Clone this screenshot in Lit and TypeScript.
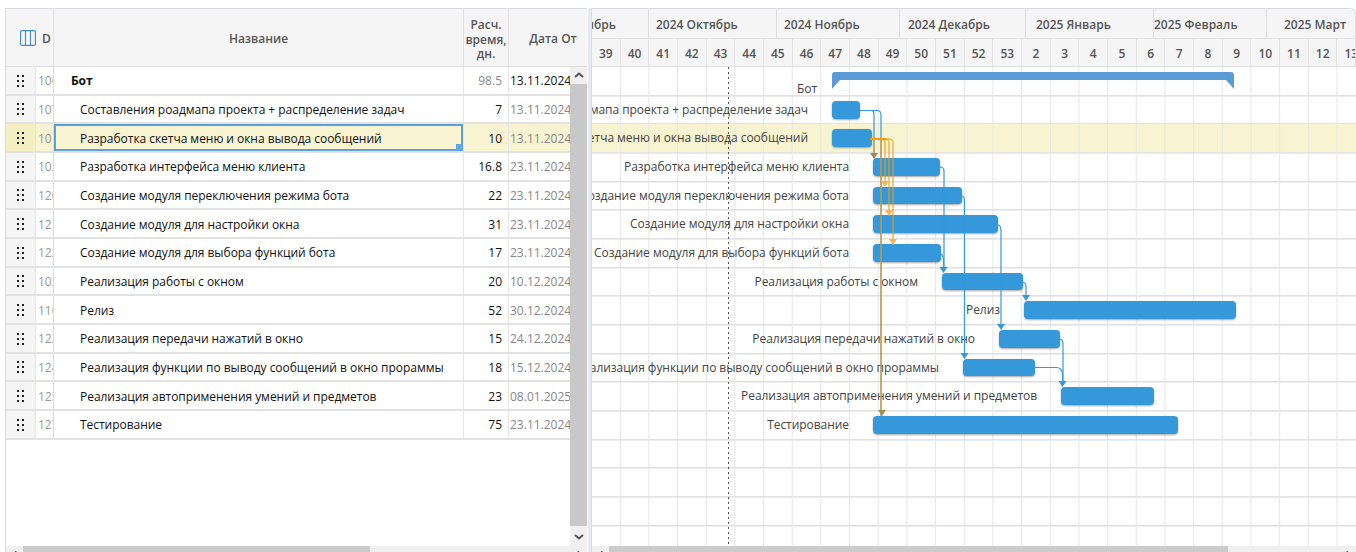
import { LitElement, html, css, svg, unsafeCSS } from "lit";
import { customElement } from "lit/decorators.js";

const FONT = `"Open Sans", "Noto Sans", sans-serif`;

const rows = [
  { id: "106", name: "Бот", hours: "98.5", from: "13.11.2024", summary: true },
  { id: "107", name: "Составления роадмапа проекта + распределение задач", hours: "7", from: "13.11.2024" },
  { id: "101", name: "Разработка скетча меню и окна вывода сообщений", hours: "10", from: "13.11.2024", selected: true },
  { id: "102", name: "Разработка интерфейса меню клиента", hours: "16.8", from: "23.11.2024" },
  { id: "120", name: "Создание модуля переключения режима бота", hours: "22", from: "23.11.2024" },
  { id: "121", name: "Создание модуля для настройки окна", hours: "31", from: "23.11.2024" },
  { id: "122", name: "Создание модуля для выбора функций бота", hours: "17", from: "23.11.2024" },
  { id: "103", name: "Реализация работы с окном", hours: "20", from: "10.12.2024" },
  { id: "110", name: "Релиз", hours: "52", from: "30.12.2024" },
  { id: "123", name: "Реализация передачи нажатий в окно", hours: "15", from: "24.12.2024" },
  { id: "124", name: "Реализация функции по выводу сообщений в окно прораммы", hours: "18", from: "15.12.2024" },
  { id: "125", name: "Реализация автоприменения умений и предметов", hours: "23", from: "08.01.2025" },
  { id: "127", name: "Тестирование", hours: "75", from: "23.11.2024" },
];

// page coordinates of the bars, index follows rows
const bars = [
  { x0: 832, x1: 1234, y: 72, h: 7 },
  { x0: 832, x1: 860, y: 101, h: 18 },
  { x0: 832, x1: 872, y: 129, h: 18 },
  { x0: 873, x1: 940, y: 158, h: 18 },
  { x0: 873, x1: 962, y: 187, h: 17 },
  { x0: 873, x1: 998, y: 215, h: 18 },
  { x0: 873, x1: 941, y: 244, h: 18 },
  { x0: 942, x1: 1023, y: 273, h: 17 },
  { x0: 1024, x1: 1236, y: 301, h: 18 },
  { x0: 999, x1: 1060, y: 330, h: 18 },
  { x0: 963, x1: 1035, y: 359, h: 17 },
  { x0: 1061, x1: 1154, y: 387, h: 18 },
  { x0: 873, x1: 1178, y: 416, h: 18 },
];

const labelEnds = [817, 808, 808, 849, 849, 849, 849, 918, 1000, 975, 939, 1037, 849];

// chart origin in page coordinates
const OX = 592;
const OY = 67;
const VIEW = `${OX} ${OY} 764 485`;

const months = [
  { label: "2024 Сентябрь", width: 57, pad: -64 },
  { label: "2024 Октябрь", width: 128, pad: 7 },
  { label: "2024 Ноябрь", width: 123, pad: 7 },
  { label: "2024 Декабрь", width: 126, pad: 8 },
  { label: "2025 Январь", width: 128, pad: 10 },
  { label: "2025 Февраль", width: 113, pad: 0 },
  { label: "2025 Март", width: 90, pad: 17 },
];

const weeks = [39, 40, 41, 42, 43, 44, 45, 46, 47, 48, 49, 50, 51, 52, 53, 2, 3, 4, 5, 6, 7, 8, 9, 10, 11, 12, 13];

const BLUE = "#3498db";
const ORANGE = "#f39c12";

const blueLinks = [
  "M860 110.5H877Q881 110.5 881 115V420",
  "M860 110.5H871Q874 110.5 874 114V155",
  "M940 167Q944 167 944 171V268",
  "M941 254Q943.5 256 943.5 260V268",
  "M962 196Q964.5 197 964.5 201V355",
  "M998 225Q1001 226 1001 230V326",
  "M1023 282Q1026 283 1026 287V297",
  "M1060 339Q1063 340 1063 344V383",
  "M1035 367.5H1057Q1062 368 1062.5 374V383",
];

const orangeLinks = [
  "M870 139H870Q874 139 874 143V155",
  "M870 139H877Q881 139 881 143V412",
  "M870 139H881Q885 139 885 143V183",
  "M870 139H885Q889 139 889 143V212",
  "M870 139H889Q893 139 893 143V241",
];

const arrow = (x: number, tip: number, fill: string) =>
  svg`<path d="M${x - 4} ${tip - 6}H${x + 4}L${x} ${tip}Z" fill=${fill}></path>`;

const chevron = (d: string) => html`
  <svg width="10" height="7" viewBox="0 0 10 7"><path d=${d} fill="none" stroke="#555" stroke-width="2"></path></svg>
`;

const hscroll = (thumb: number) => html`
  <div class="hscroll">
    <div class="hbtn">${chevron("M6.5 0.5 3 3.5 6.5 6.5")}</div>
    <div class="hthumb" style="width:${thumb}px"></div>
    <div class="htrack"></div>
    <div class="hbtn">${chevron("M3.5 0.5 7 3.5 3.5 6.5")}</div>
  </div>
`;

@customElement("app-root")
export class AppRoot extends LitElement {
  static styles = css`
    :host {
      display: flex;
      align-items: flex-start;
      width: 1356px;
      height: 552px;
      overflow: hidden;
      box-sizing: border-box;
      padding: 8px 0 0 5px;
      background: #fff;
      font-family: ${unsafeCSS(FONT)};
      font-size: 12px;
      --row: 28.67px;
      --line: #e2e2e2;
    }
    .left {
      width: 582px;
      flex: none;
      display: flex;
      flex-direction: column;
      border-left: 1px solid #dcdcdc;
      box-sizing: border-box;
    }
    .cols {
      display: grid;
      grid-template-columns: 30px 18px 410px 45px 61px;
    }
    .head {
      height: 59px;
      box-sizing: border-box;
      border-top: 1px solid #d9dde2;
      border-bottom: 1px solid #dedede;
      background: #f5f5f5;
      color: #555;
      font-weight: 600;
      grid-template-columns: 30px 18px 410px 45px 78px;
    }
    .head > div {
      display: flex;
      align-items: center;
      justify-content: center;
      text-align: center;
      border-right: 1px solid #e0e0e0;
      overflow: hidden;
      line-height: 14.5px;
      padding-top: 3px;
    }
    .head .tool {
      border-right: none;
      justify-content: flex-end;
      padding-top: 1px;
    }
    .head .d {
      justify-content: flex-start;
      padding-left: 6px;
    }
    .head .hours {
      padding: 5px 0 0;
    }
    .head .last {
      border-right: none;
      padding-left: 10px;
    }
    .main {
      height: 479px;
      display: flex;
    }
    .table {
      flex: 1;
      min-width: 0;
    }
    .row {
      height: var(--row);
      box-sizing: border-box;
      border-bottom: 2px solid var(--line);
      color: #111;
    }
    .row > div {
      display: flex;
      align-items: center;
      overflow: hidden;
      white-space: nowrap;
      border-right: 1px solid #e6e6e6;
      box-sizing: border-box;
      position: relative;
      padding-top: 1px;
    }
    .row .grip {
      background: #f5f5f5;
      justify-content: center;
      padding-right: 1px;
    }
    .row .id {
      color: #999;
      padding-left: 2px;
      border-right-color: #dcdcdc;
    }
    .row .name {
      padding-left: 26px;
      letter-spacing: -0.04px;
    }
    .row .hours {
      justify-content: flex-end;
      padding-right: 6px;
    }
    .row .from {
      color: #888;
      padding-left: 1px;
      border-right: none;
    }
    .row.summary .name {
      font-weight: 700;
      padding-left: 17px;
    }
    .row.summary .hours {
      color: #888;
    }
    .row.summary .from {
      color: #111;
    }
    .row.selected > div {
      background: #f8f4d2;
    }
    .row.selected .grip {
      background: #f3efc2;
    }
    .row.selected .name {
      box-shadow: inset 0 0 0 2px #5c9fdc;
    }
    .fill-handle {
      position: absolute;
      right: 0;
      bottom: 0;
      width: 7px;
      height: 7px;
      background: #5ca7ec;
    }
    .vscroll {
      width: 17px;
      flex: none;
      display: flex;
      flex-direction: column;
      background: #f0f0f0;
    }
    .vbtn {
      height: 17px;
      flex: none;
      display: flex;
      align-items: center;
      justify-content: center;
    }
    .vbtn.down {
      height: 20px;
    }
    .vthumb {
      flex: 1;
      background: #c8c8c8;
    }
    .hscroll {
      height: 16px;
      flex: none;
      display: flex;
      background: #f0f0f0;
    }
    .hbtn {
      width: 17px;
      flex: none;
      display: flex;
      align-items: center;
      justify-content: center;
    }
    .hthumb {
      flex: none;
      background: #cbcbcb;
    }
    .htrack {
      flex: 1;
    }
    .splitter {
      width: 5px;
      height: 544px;
      flex: none;
      box-sizing: border-box;
      background: linear-gradient(to right, #fff 1px, #e6e9ee 1px, #e6e9ee 4px, #d5dae3 4px);
    }
    .gantt {
      flex: 1;
      min-width: 0;
      display: flex;
      flex-direction: column;
    }
    .scale {
      height: 59px;
      flex: none;
      box-sizing: border-box;
      overflow: hidden;
      border-top: 1px solid #d9dde2;
      border-right: 1px solid #d9dde2;
      border-top-right-radius: 6px;
      border-bottom: 1px solid #dedede;
      background: #f5f5f5;
      color: #555;
      font-weight: 600;
    }
    .scale-row {
      display: flex;
      height: 29px;
      white-space: nowrap;
    }
    .scale-row + .scale-row {
      height: 29px;
      border-top: 1px solid #e2e2e2;
      box-sizing: border-box;
    }
    .month {
      flex: none;
      box-sizing: border-box;
      display: flex;
      align-items: center;
      border-right: 1px solid #dedede;
      padding-top: 1px;
    }
    .week {
      flex: none;
      width: 28.68px;
      box-sizing: border-box;
      display: flex;
      align-items: center;
      justify-content: center;
      border-right: 1px solid #e2e2e2;
    }
    .chart {
      height: 479px;
      flex: none;
      position: relative;
      overflow: hidden;
    }
    .grid-row {
      height: var(--row);
      box-sizing: border-box;
      border-bottom: 1px solid var(--line);
      box-shadow: 0 1px 0 #ececec;
      background-image: linear-gradient(to right, transparent 27.2px, #e6e6e6 27.2px);
      background-size: 28.68px 100%;
    }
    .grid-row.selected {
      background-color: #f8f4d2;
    }
    .links {
      position: absolute;
      left: 0;
      top: 0;
      width: 764px;
      height: 485px;
    }
    .bar {
      position: absolute;
      background: ${unsafeCSS(BLUE)};
      border-radius: 4px;
      box-shadow: 0 1px 2px rgba(60, 60, 60, 0.45);
    }
    .label {
      position: absolute;
      transform: translateX(-100%);
      white-space: nowrap;
      color: #444;
      line-height: 16px;
      letter-spacing: -0.05px;
    }
  `;

  private grip() {
    const dots = [0, 5, 10].flatMap((y) => [0, 5].map((x) => svg`<rect x=${x} y=${y} width="2" height="2"></rect>`));
    return html`<svg width="7" height="12" viewBox="0 0 7 12" fill="#222">${dots}</svg>`;
  }

  private renderLeft() {
    return html`
      <div class="left">
        <div class="cols head">
          <div class="tool">
            <svg width="16" height="16" viewBox="0 0 16 16" fill="none" stroke="#3d8ccb" stroke-width="1.1">
              <rect x="0.6" y="0.6" width="14.8" height="14.8" rx="1.5"></rect>
              <path d="M5.5 0.6V15.4M10.5 0.6V15.4"></path>
            </svg>
          </div>
          <div class="d">D</div>
          <div>Название</div>
          <div class="hours">Расч. время, дн.</div>
          <div class="last">Дата От</div>
        </div>
        <div class="main">
          <div class="table">
            ${rows.map(
              (r) => html`
                <div class="cols row ${r.summary ? "summary" : ""} ${r.selected ? "selected" : ""}">
                  <div class="grip">${this.grip()}</div>
                  <div class="id">${r.id}</div>
                  <div class="name">${r.name}${r.selected ? html`<span class="fill-handle"></span>` : ""}</div>
                  <div class="hours">${r.hours}</div>
                  <div class="from">${r.from}</div>
                </div>
              `
            )}
          </div>
          <div class="vscroll">
            <div class="vbtn">${chevron("M1 5 5 1.5 9 5")}</div>
            <div class="vthumb"></div>
            <div class="vbtn down">${chevron("M1 2 5 5.5 9 2")}</div>
          </div>
        </div>
        ${hscroll(347)}
      </div>
    `;
  }

  private renderGantt() {
    return html`
      <div class="gantt">
        <div class="scale">
          <div class="scale-row">
            ${months.map(
              (m) => html`<div class="month" style="width:${m.width}px;padding-left:${Math.max(m.pad, 0)}px">
                <span style="margin-left:${Math.min(m.pad, 0)}px">${m.label}</span>
              </div>`
            )}
          </div>
          <div class="scale-row">${weeks.map((w) => html`<div class="week">${w}</div>`)}</div>
        </div>
        <div class="chart">
          ${Array.from({ length: 17 }, (_, i) => html`<div class="grid-row ${i === 2 ? "selected" : ""}"></div>`)}
          <svg class="links" viewBox=${VIEW} fill="none">
            <path d="M728.5 67V552" stroke="#555" stroke-dasharray="2 3"></path>
          </svg>
          ${rows.map(
            (_, i) => html`<div class="label" style="left:${labelEnds[i] - OX}px;top:${bars[i].y - OY + (i === 0 ? 9 : bars[i].h / 2 - 8)}px">
              ${rows[i].name}
            </div>`
          )}
          ${bars.map((b, i) =>
            i === 0
              ? html`
                  <svg class="links" viewBox=${VIEW}>
                    <path d="M832 75Q832 72 835 72H1231Q1234 72 1234 75V89L1226 80H840L832 89Z" fill="#5b9bd5"></path>
                  </svg>
                `
              : html`<div class="bar" style="left:${b.x0 - OX}px;top:${b.y - OY}px;width:${b.x1 - b.x0}px;height:${b.h}px"></div>`
          )}
          <svg class="links" viewBox=${VIEW} fill="none">
            ${blueLinks.map((d) => svg`<path d=${d} stroke=${BLUE} stroke-width="1.2"></path>`)}
            ${[[943.5, 273], [964.5, 359], [1001, 330], [1026, 301], [1062.5, 387]].map(([x, y]) => arrow(x, y, BLUE))}
            ${orangeLinks.map((d) => svg`<path d=${d} stroke=${ORANGE} stroke-width="1.6" opacity="0.7"></path>`)}
            <path d="M870 139H886" stroke="#f39c12" stroke-width="2"></path>
            ${arrow(874, 159, "#9a8a5a")} ${arrow(882, 416, "#a88c4e")}
            ${arrow(885, 187, "#f5b45a")} ${arrow(889, 216, "#f5b45a")} ${arrow(893, 245, "#f5b45a")}
          </svg>
        </div>
        ${hscroll(619)}
      </div>
    `;
  }

  render() {
    return html`${this.renderLeft()}<div class="splitter"></div>${this.renderGantt()}`;
  }
}
